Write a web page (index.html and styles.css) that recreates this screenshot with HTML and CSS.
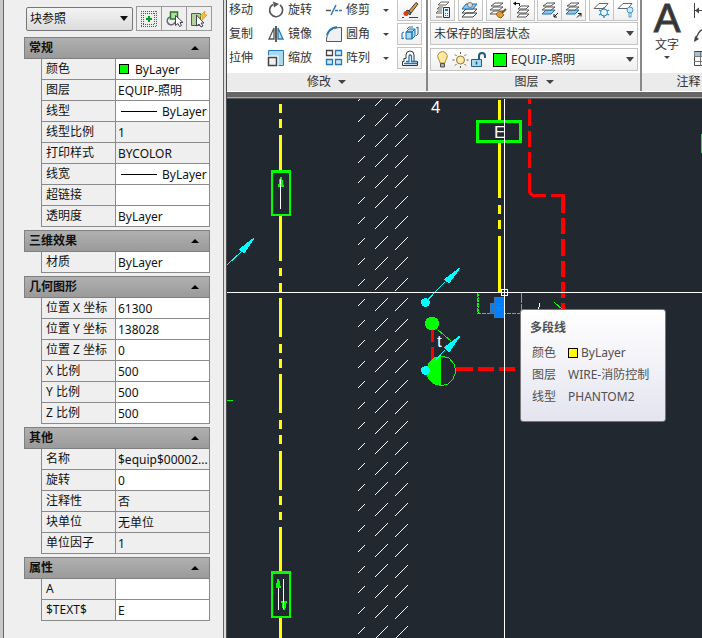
FILE: index.html
```
<!DOCTYPE html>
<html lang="zh-CN">
<head>
<meta charset="utf-8">
<title>块参照</title>
<link rel="stylesheet" href="styles.css">
</head>
<body>
<div class="app">
  <aside class="palette">
    <div class="palette-bar">
      <label class="pick"><select class="pick-type" aria-label="对象类型"><option>块参照</option></select></label>
      <div class="tool-group">
        <button class="tool" aria-label="切换 PICKADD"><svg width="18" height="18" viewBox="0 0 18 18"><path d="M1 1.500h16M1 16.500h16M3 3.500h12M3 14.500h12M1.500 1v16M16.500 1v16M3.500 3v12M14.500 3v12" stroke="#555" stroke-dasharray="1 1"/><path d="M9 6v6M6 9h6" stroke="#00a11a" stroke-width="2"/></svg></button>
        <button class="tool" aria-label="选择对象"><svg width="18" height="18" viewBox="0 0 18 18"><path d="M5 7a4 4 0 1 0 5 5" fill="none" stroke="#667" stroke-width="1.500"/><path d="M5.500 2h7v7h-7z" fill="#b7dca0" stroke="#287a28" stroke-width="1.500"/><path d="M10.500 5.500v10l2.500-2 1.500 3 2-1-1.500-3h3z" fill="#fff" stroke="#445"/></svg></button>
        <button class="tool" aria-label="快速选择"><svg width="18" height="18" viewBox="0 0 18 18"><path d="M1.500 3.500h9v12h-9z" fill="#b7d09b" stroke="#287a28"/><path d="M6.500 5v11l2.500-2 2 3 2-1-2-3h3z" fill="#fff" stroke="#445"/><path d="M15 1l-5 5h3l-1 4 5-5h-3z" fill="#ffc94a" stroke="#f09a10"/></svg></button>
      </div>
    </div>

    <section class="group">
      <h2><button class="group-head">常规</button></h2>
      <table class="props">
        <tr><th><label for="p1">颜色</label></th><td><div class="cell"><span class="swatch"></span><input id="p1" value="ByLayer"></div></td></tr>
        <tr><th><label for="p2">图层</label></th><td><div class="cell"><input id="p2" value="EQUIP-照明"></div></td></tr>
        <tr><th><label for="p3">线型</label></th><td><div class="cell"><span class="line"></span><input id="p3" value="ByLayer"></div></td></tr>
        <tr class="locked"><th><label for="p4">线型比例</label></th><td><div class="cell"><input id="p4" value="1" readonly></div></td></tr>
        <tr class="locked"><th><label for="p5">打印样式</label></th><td><div class="cell"><input id="p5" value="BYCOLOR" readonly></div></td></tr>
        <tr><th><label for="p6">线宽</label></th><td><div class="cell"><span class="line"></span><input id="p6" value="ByLayer"></div></td></tr>
        <tr><th><label for="p7">超链接</label></th><td><div class="cell"><input id="p7"></div></td></tr>
        <tr><th><label for="p8">透明度</label></th><td><div class="cell"><input id="p8" value="ByLayer"></div></td></tr>
      </table>
    </section>

    <section class="group">
      <h2><button class="group-head">三维效果</button></h2>
      <table class="props">
        <tr><th><label for="m1">材质</label></th><td><div class="cell"><input id="m1" value="ByLayer"></div></td></tr>
      </table>
    </section>

    <section class="group">
      <h2><button class="group-head">几何图形</button></h2>
      <table class="props">
        <tr><th><label for="g1">位置 X 坐标</label></th><td><div class="cell"><input id="g1" value="61300"></div></td></tr>
        <tr><th><label for="g2">位置 Y 坐标</label></th><td><div class="cell"><input id="g2" value="138028"></div></td></tr>
        <tr><th><label for="g3">位置 Z 坐标</label></th><td><div class="cell"><input id="g3" value="0"></div></td></tr>
        <tr><th><label for="g4">X 比例</label></th><td><div class="cell"><input id="g4" value="500"></div></td></tr>
        <tr><th><label for="g5">Y 比例</label></th><td><div class="cell"><input id="g5" value="500"></div></td></tr>
        <tr><th><label for="g6">Z 比例</label></th><td><div class="cell"><input id="g6" value="500"></div></td></tr>
      </table>
    </section>

    <section class="group">
      <h2><button class="group-head">其他</button></h2>
      <table class="props">
        <tr class="locked"><th><label for="o1">名称</label></th><td><div class="cell"><input id="o1" value="$equip$00002..." readonly></div></td></tr>
        <tr><th><label for="o2">旋转</label></th><td><div class="cell"><input id="o2" value="0"></div></td></tr>
        <tr class="locked"><th><label for="o3">注释性</label></th><td><div class="cell"><input id="o3" value="否" readonly></div></td></tr>
        <tr class="locked"><th><label for="o4">块单位</label></th><td><div class="cell"><input id="o4" value="无单位" readonly></div></td></tr>
        <tr class="locked"><th><label for="o5">单位因子</label></th><td><div class="cell"><input id="o5" value="1" readonly></div></td></tr>
      </table>
    </section>

    <section class="group">
      <h2><button class="group-head">属性</button></h2>
      <table class="props">
        <tr><th><label for="a1">A</label></th><td><div class="cell"><input id="a1"></div></td></tr>
        <tr><th><label for="a2">$TEXT$</label></th><td><div class="cell"><input id="a2" value="E"></div></td></tr>
      </table>
    </section>
  </aside>

  <main class="workspace">
    <div class="ribbon">
      <section class="panel modify">
        <div class="panel-body modify-grid">
          <button class="cmd">移动</button>
          <button class="cmd"><svg width="18" height="18" viewBox="0 0 18 18"><path d="M6 3.500A6.500 6.500 0 1 0 13 4" fill="none" stroke="#555" stroke-width="1.600"/><path d="M6 .5l6 2.500-5 3.500z" fill="#555"/></svg>旋转</button>
          <button class="cmd"><svg width="18" height="18" viewBox="0 0 18 18"><path d="M1 9.500h5" stroke="#555" stroke-width="1.500"/><path d="M10 9.500h7" stroke="#2a7abf" stroke-width="1.500" stroke-dasharray="3 1"/><path d="M6 14l5-10" stroke="#2a7abf" stroke-width="1.500"/></svg>修剪</button>
          <button class="drop" aria-label="修剪选项"></button>
          <button class="tool modify-tool" aria-label="删除"><svg width="18" height="18" viewBox="0 0 18 18"><path d="M8 10l7-8.500 2 1.500-7 9z" fill="#d9a441" stroke="#433"/><path d="M5 10l2-1 3 3-1 2z" fill="#777" stroke="#333"/><circle cx="5" cy="12.500" r="2.500" fill="#d2410e"/><path d="M1 16.500h2M8 16.500h9" stroke="#444"/></svg></button>

          <button class="cmd">复制</button>
          <button class="cmd"><svg width="18" height="18" viewBox="0 0 18 18"><path d="M7 3v11H2z" fill="#fff" stroke="#555" stroke-width="1.300"/><path d="M11 3v11h5z" fill="#b9e0f3" stroke="#2679b8" stroke-width="1.300"/><path d="M9 1v16" stroke="#222" stroke-width="1.500"/></svg>镜像</button>
          <button class="cmd"><svg width="18" height="18" viewBox="0 0 18 18"><path d="M1.500 16.500h15v-14H14Q2 3 1.500 14z" fill="#eef0f2" stroke="#555"/><path d="M2 10Q4 3 12 2" fill="none" stroke="#2679b8" stroke-width="2"/></svg>圆角</button>
          <button class="drop" aria-label="圆角选项"></button>
          <button class="tool modify-tool" aria-label="分解"><svg width="18" height="18" viewBox="0 0 18 18"><path d="M5 7l3-3h6l-3 3zM5 7h6v7H5zM11 7l3-3v7l-3 3z" fill="#a9dcf4" stroke="#1d6fae"/><path d="M3 7L1 8v6l2-1M15 3l2-1v7l-2 2M6 4l2-2h4" fill="none" stroke="#1d6fae"/></svg></button>

          <button class="cmd">拉伸</button>
          <button class="cmd"><svg width="18" height="18" viewBox="0 0 18 18"><path d="M1.500 1.500h15v15h-15z" fill="#a6d8ef" stroke="#2679b8"/><path d="M0 6.500h11.500V18H0z" fill="#fff"/><path d="M1.500 8.500h8v8h-8z" fill="#f0f0f0" stroke="#444" stroke-width="1.500"/></svg>缩放</button>
          <button class="cmd"><svg width="18" height="18" viewBox="0 0 18 18"><g fill="#cfeaf7" stroke="#2679b8" stroke-width="1.300"><path d="M1.500 1.500h6v5h-6z" fill="#fff" stroke="#444"/><path d="M10.500 1.500h6v5h-6zM1.500 10.500h6v5h-6zM10.500 10.500h6v5h-6z"/></g></svg>阵列</button>
          <button class="drop" aria-label="阵列选项"></button>
          <button class="tool modify-tool" aria-label="偏移"><svg width="18" height="18" viewBox="0 0 18 18"><path d="M2 16.500h14.500v-4H13V6a4 4 0 0 0-8 0v3.500H3v3H1.500v4z" fill="#fff" stroke="#333"/><path d="M3 14.500h13M5 12.500h3V7q1-2 2.500 0v5.500H16" fill="none" stroke="#1d75bd" stroke-width="1.300"/></svg></button>
        </div>
        <button class="panel-foot">修改</button>
      </section>

      <section class="panel layers">
        <div class="panel-body layer-body">
          <div class="layer-tools">
            <div class="tool-group"><button class="tool" aria-label="图层特性"><svg width="20" height="18" viewBox="0 0 20 18"><path d="M5 4l3-3h8l-3 3zM4 8l2-2h4M3 12l2-2h4M3 16h6M3 12h6M4 8h5" fill="none" stroke="#666"/><path d="M10.500 6.500h6v10h-6z" fill="#eaf6fc" stroke="#333"/><path d="M12 9h3" stroke="#1d75bd" stroke-width="2"/><path d="M12 12.500h1M14 12.500h1M12 14.500h1M14 14.500h1" stroke="#1d75bd"/></svg></button></div>
            <div class="tool-group"><button class="tool" aria-label="置为当前"><svg width="20" height="18" viewBox="0 0 20 18"><path d="M2 16l4-4h11l-4 4zM2 12l4-4h11l-4 4z" fill="#fff" stroke="#444"/><path d="M2 8l4-5h11l-4 5z" fill="#8bcaf0" stroke="#1d6fae"/><circle cx="10" cy="4" r="2.500" fill="#ddd" stroke="#777"/></svg></button></div>
            <div class="tool-group"><button class="tool" aria-label="匹配图层"><svg width="20" height="18" viewBox="0 0 20 18"><path d="M2 13l4-3h9l-4 3zM2 9l4-3h9l-4 3zM3 5l4-3h8l-4 3z" fill="#fff" stroke="#555"/><path d="M8 13l4-3 4 4-3 3q-3 0-5-4z" fill="#e39a37" stroke="#a45f13"/><path d="M14 12l4-4" stroke="#8b4d16" stroke-width="2"/></svg></button><button class="tool" aria-label="上一个图层"><svg width="20" height="18" viewBox="0 0 20 18"><path d="M5 16l3-3h9l-3 3zM5 12l3-3h9l-3 3zM6 8l3-3h8l-3 3z" fill="#fff" stroke="#555"/><path d="M7.500 5V2.500H3" fill="none" stroke="#111"/><path d="M1 2.500l3-2v4z"/></svg></button></div>
            <div class="tool-group"><button class="tool" aria-label="隔离"><svg width="20" height="18" viewBox="0 0 20 18"><path d="M2 13l4-4h9l-4 4z" fill="#8bcaf0" stroke="#1d6fae"/><path d="M2 9l4-3h9l-4 3zM3 5l4-3h8l-4 3z" fill="#fff" stroke="#555"/><path d="M18 12l-4 4m0-3v3h3" fill="none" stroke="#111"/></svg></button><button class="tool" aria-label="取消隔离"><svg width="20" height="18" viewBox="0 0 20 18"><path d="M2 13l4-4h9l-4 4z" fill="#8bcaf0" stroke="#1d6fae"/><path d="M2 9l4-3h9l-4 3zM3 5l4-3h8l-4 3z" fill="#fff" stroke="#555"/><path d="M13 16.500l4-4m-3 0h3v3" fill="none" stroke="#111"/></svg></button></div>
            <div class="tool-group"><button class="tool" aria-label="冻结"><svg width="20" height="18" viewBox="0 0 20 18"><path d="M2 7.500l5-5h9l-4 5z" fill="#fff" stroke="#666"/><path d="M12 6v11M7 9l10 5M17 9L7 14" stroke="#2680c2" stroke-width="1.300"/><circle cx="12" cy="11.500" r="3.500" fill="#e4f5fd" stroke="#2680c2"/></svg></button><button class="tool" aria-label="关闭图层"><svg width="20" height="18" viewBox="0 0 20 18"><path d="M2 7.500l5-5h9l-4 5z" fill="#fff" stroke="#666"/><circle cx="14" cy="9" r="3" fill="#c8e9f8" stroke="#4b98c4"/><path d="M13 12h2v4h-2z" fill="#fff" stroke="#4b98c4"/></svg></button></div>
          </div>
          <label class="combo"><select aria-label="图层状态"><option>未保存的图层状态</option></select></label>
          <label class="combo current">
            <svg width="56" height="18" viewBox="0 0 56 18"><path d="M5 12Q5 10 3.500 8a4.800 4.800 0 1 1 8 0Q10 10 10 12z" fill="#ffe9a3" stroke="#b18d35"/><path d="M5.500 12.500h4v3.500h-4z" fill="#aaa" stroke="#555"/><circle cx="25.500" cy="9" r="4" fill="#ffeaa6" stroke="#8b7440"/><path d="M25.500 1v2M25.500 15v2M17.500 9h2M31.500 9h2M20 3.500l1.500 1.500M31 3.500L29.500 5M20 14.500l1.500-1.500M31 14.500L29.500 13" stroke="#665a3a"/><path d="M36.500 8.500h10v7h-10z" fill="#a6daf3" stroke="#205c83"/><path d="M44 8V5q0-3 3-3t3 3v2" fill="none" stroke="#205c83" stroke-width="2"/><path d="M41.500 10.500v3" stroke="#1b506f" stroke-width="1.500"/></svg>
            <span class="layer-color"></span>
            <select aria-label="当前图层"><option>EQUIP-照明</option></select>
          </label>
        </div>
        <button class="panel-foot">图层</button>
      </section>

      <section class="panel annotate">
        <div class="panel-body annotate-body">
          <button class="big"><span class="big-letter">A</span>文字<span class="drop-mark"></span></button>
          <svg class="annotate-icons" width="18" height="72" viewBox="0 0 18 72"><path d="M1.500 3v15M2 10.500h16" stroke="#444"/><path d="M2 10.500l4-3v6z" fill="#444"/><path d="M2 41Q6 30 9 30h9" fill="none" stroke="#444" stroke-width="1.300"/><path d="M1 42l1-6 4 3z" fill="#444"/><path d="M1.500 51.500h20v14h-20z" fill="#fff" stroke="#444"/><path d="M1.500 52h20v4h-20z" fill="#a9c0d0"/><path d="M1 56.500h18M1 61.500h18M7.500 52v14" stroke="#777"/></svg>
        </div>
        <button class="panel-foot">注释</button>
      </section>
    </div>

    <div class="canvas">
      <svg class="drawing" viewBox="227 99 475 539" preserveAspectRatio="xMinYMin slice" shape-rendering="crispEdges">
        <defs>
          <pattern id="hatch" patternUnits="userSpaceOnUse" x="350" y="109" width="70" height="41">
            <path d="M8 13l7-7M25 17l13-13M45 18l13-13M8 33l7-7M25 38l13-13M45 38l13-13" stroke="#fff"/>
          </pattern>
        </defs>
        <rect x="350" y="99" width="70" height="539" fill="url(#hatch)"/>
        <path class="yellow" d="M280.500 104V113M280.500 119V128M280.500 135V172M280.500 215V261M280.500 268V276M280.500 283V292M280.500 298V337M280.500 344V353M280.500 359V368M280.500 374V413M280.500 420V429M280.500 435V444M280.500 451V490M280.500 496V505M280.500 512V520M280.500 527V573M280.500 616V638"/>
        <path class="yellow" d="M499.500 100V122M499.500 141V198M499.500 205V214M499.500 220V229M499.500 236V292"/>
        <path class="green" d="M272 172H290V215H272zM272 573H290V617H272z" stroke-width="2"/>
        <path class="green" d="M271 171.500H291M271 572.500H291" stroke-width="3"/>
        <path class="green" d="M477.500 121.500H520.500V141.500H477.500z" stroke-width="3"/>
        <path class="green" d="M227 400.500h6"/>
        <path fill="#0f0" d="M280 177h2l2 10h-6zM277 579h2l2 9h-5zM281 601h6l-2 9h-2z"/>
        <path class="white" d="M280.500 179V209M278.500 588V610M283.500 579V609"/>
        <path class="red" d="M529.500 99V104M529.500 109V126M529.500 131V147M529.500 152V168M529.500 173V189Q529.500 195.500 535 195.500H546M551 195.500H565"/>
        <path class="red thick" d="M563 195V213M563 218V234M563 239V256M563 261V277M563 282V298M563 303V311"/>
        <path class="red" d="M432.500 330V342M432.500 347V360"/>
        <path class="red thick" d="M456 369H473M478 369H494M499 369H515"/>
        <path class="white" d="M539.500 303v3l-1 2v3"/>
        <path class="green" d="M554 302l9 8M438 330l13 11"/>
        <text class="cad" x="431" y="113">4</text>
        <text class="cad" x="494" y="138">E</text>
        <text class="cad" x="437" y="347">t</text>
        <circle cx="432" cy="323.500" r="7" fill="#0f0"/>
        <path class="green" d="M441 356l8 2 5 6 2 7-3 8-5 5-8 2"/>
        <path d="M441 356v30l-8-2-5-5-2-8 3-9 5-5z" fill="#0f0"/>
        <g fill="#0ff" stroke="#0ff">
          <path d="M425.500 302L445 282M425.500 371L445 350M227 265L242 251" fill="none"/>
          <path d="M444.500 279.500L449 283L460 268zM444.500 347.500L449 352L460 336zM239.500 249.500L244 253L254 238z"/>
          <circle cx="425.500" cy="302.500" r="4"/><circle cx="425.500" cy="370.500" r="4"/>
        </g>
        <path class="green" d="M477 292.500H521V313.500H477.500V293" stroke-dasharray="4 1"/>
        <path class="green" d="M478.500 294v19M521.500 292v22" stroke-dasharray="2 1"/>
        <path d="M490.500 303.500h4v10h-4zM494.500 297.500h10v20h-10zM494 307.500h10" fill="#0080ff" stroke="#4178a8"/>
        <path class="white" d="M504.500 99V638M227 292.500H702"/>
        <path class="white" d="M501.500 289.500h6v6h-6z"/>
        <path d="M701.500 134V153" stroke="#2be02b"/>
      </svg>
      <div class="tooltip" role="tooltip">
        <h3>多段线</h3>
        <dl>
          <dt>颜色</dt><dd><span class="swatch yellow-swatch"></span>ByLayer</dd>
          <dt>图层</dt><dd>WIRE-消防控制</dd>
          <dt>线型</dt><dd>PHANTOM2</dd>
        </dl>
      </div>
    </div>
  </main>
</div>
</body>
</html>
```
FILE: styles.css
```
* { box-sizing: border-box; }

body, button, input, select {
  margin: 0;
  font: 12px/16px "Noto Sans", "Noto Sans CJK SC", sans-serif;
  color: #111;
}

button {
  padding: 0;
  border: 0;
  background: none;
}

svg { display: block; flex: none; }

.app {
  display: flex;
  min-height: 100vh;
  overflow: hidden;
}

/* Properties palette */
.palette {
  flex: none;
  width: 227px;
  padding: 6px 13px 8px 20px;
  background: #efefef;
  border-left: 4px solid #666;
  border-right: 4px solid #666;
  border-image: linear-gradient(90deg, #c8c8c8 0 3px, #666 3px 4px, #efefef 4px calc(100% - 4px), #666 calc(100% - 4px) calc(100% - 3px), #ddd calc(100% - 3px) calc(100% - 1px), #4a4a4a calc(100% - 1px)) 0 4;
}

.palette-bar {
  display: flex;
  align-items: center;
  justify-content: space-between;
  height: 25px;
  margin: 0 -2px 6px 2px;
}

.pick, .combo {
  position: relative;
  display: flex;
  align-items: center;
}

.pick::after, .combo::after {
  content: "";
  position: absolute;
  right: 4px;
  border: 4px solid transparent;
  border-top: 5px solid #111;
  border-bottom: 0;
  pointer-events: none;
}

select {
  appearance: none;
  width: 100%;
  height: 100%;
  padding: 0 3px;
  border: 0;
  border-radius: 0;
  background: transparent;
}

.pick {
  width: 107px;
  height: 24px;
  border: 1px solid #777;
  border-radius: 2px;
  background: linear-gradient(#f3f3f3, #dcdcdc);
}

.tool-group { display: flex; }

.tool {
  display: flex;
  align-items: center;
  justify-content: center;
  width: 26px;
  height: 25px;
  border: 1px solid #999;
}

.tool + .tool { margin-left: -1px; }

.group { margin-bottom: 3px; }

h2, h3 { margin: 0; font-size: 12px; }

.group-head {
  display: flex;
  align-items: center;
  justify-content: space-between;
  width: 100%;
  height: 22px;
  padding: 0 10px 0 4px;
  border: 1px solid #808080;
  background: linear-gradient(#b0b0b0, #9a9a9a);
  font-weight: bold;
}

.group-head::after {
  content: "";
  border: 4px solid transparent;
  border-bottom: 4px solid #000;
  border-top: 0;
}

.props {
  width: calc(100% - 17px);
  margin-left: 17px;
  border-spacing: 0;
  table-layout: fixed;
}

.props th, .props td {
  height: 21px;
  padding: 0;
  border: 1px solid #8a8a8a;
  border-top: 0;
}

.props th {
  width: 75px;
  padding-left: 4px;
  font-weight: normal;
  text-align: left;
  white-space: nowrap;
}

.props td { border-left: 0; background: #fff; }
.props .locked td { background: #efefef; }

.cell {
  display: flex;
  align-items: center;
  overflow: hidden;
}

.cell input {
  flex: 1;
  min-width: 0;
  height: 20px;
  padding: 0 0 0 2px;
  border: 0;
  background: transparent;
}

.swatch {
  flex: none;
  width: 10px;
  height: 10px;
  margin: 0 4px 0 3px;
  border: 1px solid #000;
  background: #0f0;
}

.line {
  width: 36px;
  height: 1px;
  margin: 0 3px 0 5px;
  background: #000;
}

/* Ribbon */
.workspace {
  display: flex;
  flex: 1;
  flex-direction: column;
  min-width: 0;
}

.ribbon {
  display: flex;
  flex: none;
  height: 99px;
  background: #fff;
  border-bottom: 7px solid #666;
  border-image: linear-gradient(to top, #555 0 1px, #aaa 1px 2px, #666 2px) 0 0 7 0;
  overflow: hidden;
}

.panel {
  display: flex;
  flex: none;
  flex-direction: column;
  height: 91px;
  border-right: 1px solid #888;
}

.panel, .panel button, .panel select { color: #333; }

.panel-body { height: 73px; }

.panel-foot {
  display: flex;
  align-items: center;
  justify-content: center;
  gap: 7px;
  height: 18px;
  background: #ebebeb;
}

.panel-foot::after, .drop::after, .drop-mark {
  content: "";
  border: 4px solid transparent;
  border-top: 4px solid #444;
  border-bottom: 0;
}

.drop::after, .drop-mark { border-width: 3px 3px 0; }

.modify { width: 201px; border-right-width: 2px; }

.modify-grid {
  display: grid;
  grid-template-columns: 38px 58px 50px 22px 25px;
  grid-template-rows: repeat(3, 24px);
  align-items: center;
  padding-left: 2px;
  margin-top: -2px;
  margin-bottom: 2px;
}

.cmd {
  display: flex;
  align-items: center;
  gap: 3px;
  white-space: nowrap;
}

.drop {
  display: flex;
  align-items: center;
  justify-content: center;
  height: 16px;
}

.panel .tool {
  width: 25px;
  height: 22px;
  border-color: #c4c4c4;
  background: linear-gradient(#fff, #f0f0f0);
}

.layers { width: 214px; border-right-width: 2px; }

.layer-body {
  display: flex;
  flex-direction: column;
  padding: 0 2px;
  gap: 3px;
}

.layer-tools {
  display: flex;
  justify-content: space-between;
  height: 20px;
  margin-top: -1px;
}

.combo {
  height: 23px;
  border: 1px solid #c4c4c4;
  background: linear-gradient(#fff, #efefef);
}

.combo::after { right: 3px; border-top-color: #444; }

.current { padding-left: 4px; }

.layer-color {
  flex: none;
  width: 14px;
  height: 14px;
  margin: 0 1px 0 2px;
  border: 1px solid #000;
  background: #0f0;
}

.annotate { width: 108px; border-right: 0; }

.annotate-body {
  display: flex;
  padding-left: 10px;
  gap: 11px;
}

.big {
  display: flex;
  flex-direction: column;
  align-items: center;
  width: 30px;
}

.big-letter {
  height: 37px;
  font: 40px/36px "Liberation Sans", sans-serif;
  -webkit-text-stroke: 1px #444;
}

.big .drop-mark { margin-top: 3px; }

/* Drawing area */
.canvas {
  position: relative;
  flex: 1;
  background: #212830;
  overflow: hidden;
}

.drawing {
  position: absolute;
  width: 100%;
  height: 100%;
}

.drawing path { stroke-width: 1; }
.drawing .yellow { stroke: #ff0; stroke-width: 3; }
.drawing .green { fill: none; stroke: #0f0; }
.drawing .green[stroke-width="2"] { stroke-width: 2; }
.drawing .green[stroke-width="3"] { stroke-width: 3; }
.drawing .white { fill: none; stroke: #fff; }
.drawing .red { fill: none; stroke: #f00; stroke-width: 3; }
.drawing .red.thick { stroke-width: 4; }

.cad {
  font: 17px "Liberation Sans", sans-serif;
  fill: #fff;
}

.tooltip {
  position: absolute;
  left: 293px;
  top: 210px;
  width: 146px;
  height: 113px;
  padding: 10px 9px;
  border: 1px solid #777;
  border-radius: 3px;
  background: linear-gradient(#fff, #e4e4f0);
  color: #505050;
}

.tooltip h3 { margin-bottom: 6px; }

.tooltip dl {
  display: grid;
  grid-template-columns: 36px 1fr;
  line-height: 22px;
  margin: 0 0 0 2px;
  white-space: nowrap;
}

.tooltip dd { display: flex; align-items: center; margin: 0; }
.tooltip .swatch { margin: 0 3px 0 0; background: #ff0; }
```
